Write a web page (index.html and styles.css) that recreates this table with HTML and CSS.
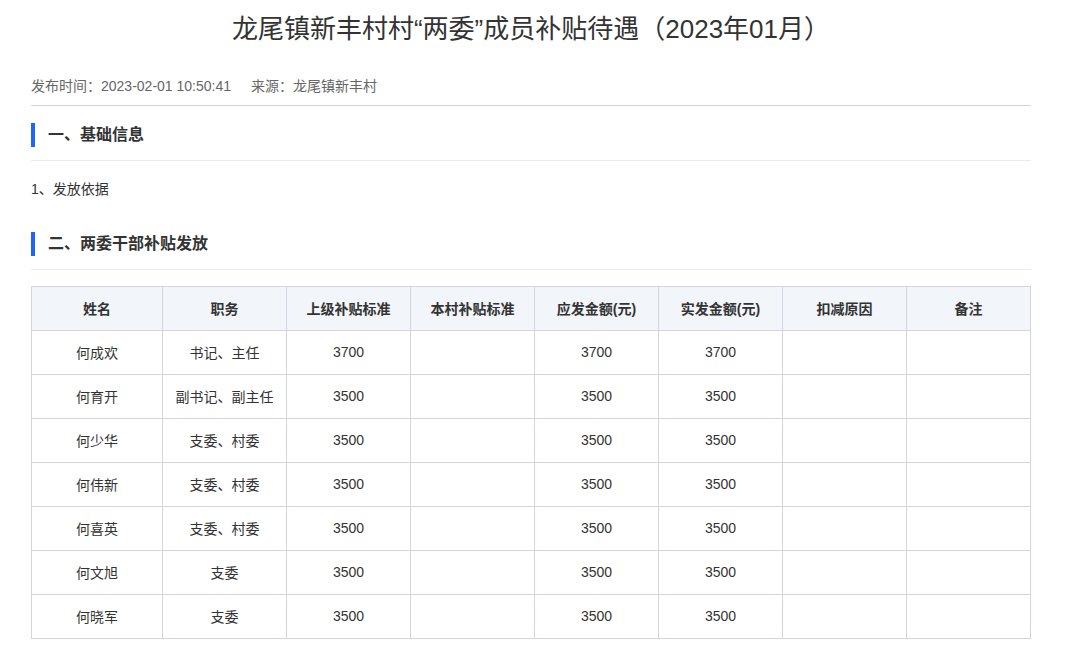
FILE: index.html
```html
<!DOCTYPE html>
<html lang="zh">
<head>
<meta charset="utf-8">
<title>龙尾镇新丰村村“两委”成员补贴待遇</title>
<link rel="stylesheet" href="styles.css">
</head>
<body>
<div class="page">
  <h1 class="title">龙尾镇新丰村村“两委”成员补贴待遇（2023年01月）</h1>
  <div class="meta"><span>发布时间：2023-02-01 10:50:41</span><span>来源：龙尾镇新丰村</span></div>
  <h2 class="sec">一、基础信息</h2>
  <p class="para">1、发放依据</p>
  <h2 class="sec">二、两委干部补贴发放</h2>
  <table class="tbl">
    <thead>
      <tr><th class="c1">姓名</th><th>职务</th><th>上级补贴标准</th><th>本村补贴标准</th><th>应发金额(元)</th><th>实发金额(元)</th><th>扣减原因</th><th>备注</th></tr>
    </thead>
    <tbody>
      <tr><td>何成欢</td><td>书记、主任</td><td>3700</td><td></td><td>3700</td><td>3700</td><td></td><td></td></tr>
      <tr><td>何育开</td><td>副书记、副主任</td><td>3500</td><td></td><td>3500</td><td>3500</td><td></td><td></td></tr>
      <tr><td>何少华</td><td>支委、村委</td><td>3500</td><td></td><td>3500</td><td>3500</td><td></td><td></td></tr>
      <tr><td>何伟新</td><td>支委、村委</td><td>3500</td><td></td><td>3500</td><td>3500</td><td></td><td></td></tr>
      <tr><td>何喜英</td><td>支委、村委</td><td>3500</td><td></td><td>3500</td><td>3500</td><td></td><td></td></tr>
      <tr><td>何文旭</td><td>支委</td><td>3500</td><td></td><td>3500</td><td>3500</td><td></td><td></td></tr>
      <tr><td>何晓军</td><td>支委</td><td>3500</td><td></td><td>3500</td><td>3500</td><td></td><td></td></tr>
    </tbody>
  </table>
</div>
</body>
</html>
```

FILE: styles.css
```css
html, body {
  margin: 0;
  padding: 0;
  background: #fff;
}
body {
  font-family: "Liberation Sans", Arial, "Noto Sans CJK SC", sans-serif;
  color: #333;
}
.page {
  width: 1000px;
  margin-left: 31px;
}
.title {
  margin: 0;
  padding-top: 11px;
  height: 36px;
  line-height: 36px;
  font-size: 26px;
  font-weight: normal;
  text-align: center;
  color: #333;
}
.meta {
  margin-top: 29px;
  font-size: 14px;
  line-height: 20px;
  color: #666;
  padding-bottom: 9px;
  border-bottom: 1px solid #d4d4d4;
  display: flex;
  gap: 20px;
}
.sec {
  margin: 17px 0 0;
  height: 24px;
  line-height: 24px;
  padding-left: 13px;
  border-left: 4px solid #1e64fa;
  font-size: 16px;
  font-weight: bold;
  color: #333;
  position: relative;
}
.sec::after {
  content: "";
  position: absolute;
  left: -4px;
  right: 0;
  top: 37px;
  border-bottom: 1px solid #ebebeb;
}
.para {
  margin: 32px 0 33px;
  font-size: 14px;
  line-height: 20px;
  color: #333;
}
.para + .sec { margin-top: 0; }
.tbl {
  margin-top: 30px;
  width: 1000px;
  border-collapse: collapse;
  table-layout: fixed;
  font-size: 14px;
  color: #333;
}
.tbl th, .tbl td {
  border: 1px solid #d3d6e0;
  height: 41px;
  padding: 0 0 2px;
  text-align: center;
}
.tbl th {
  background: #f2f5f9;
  font-weight: bold;
}
.tbl .c1 { width: 130px; }
```
